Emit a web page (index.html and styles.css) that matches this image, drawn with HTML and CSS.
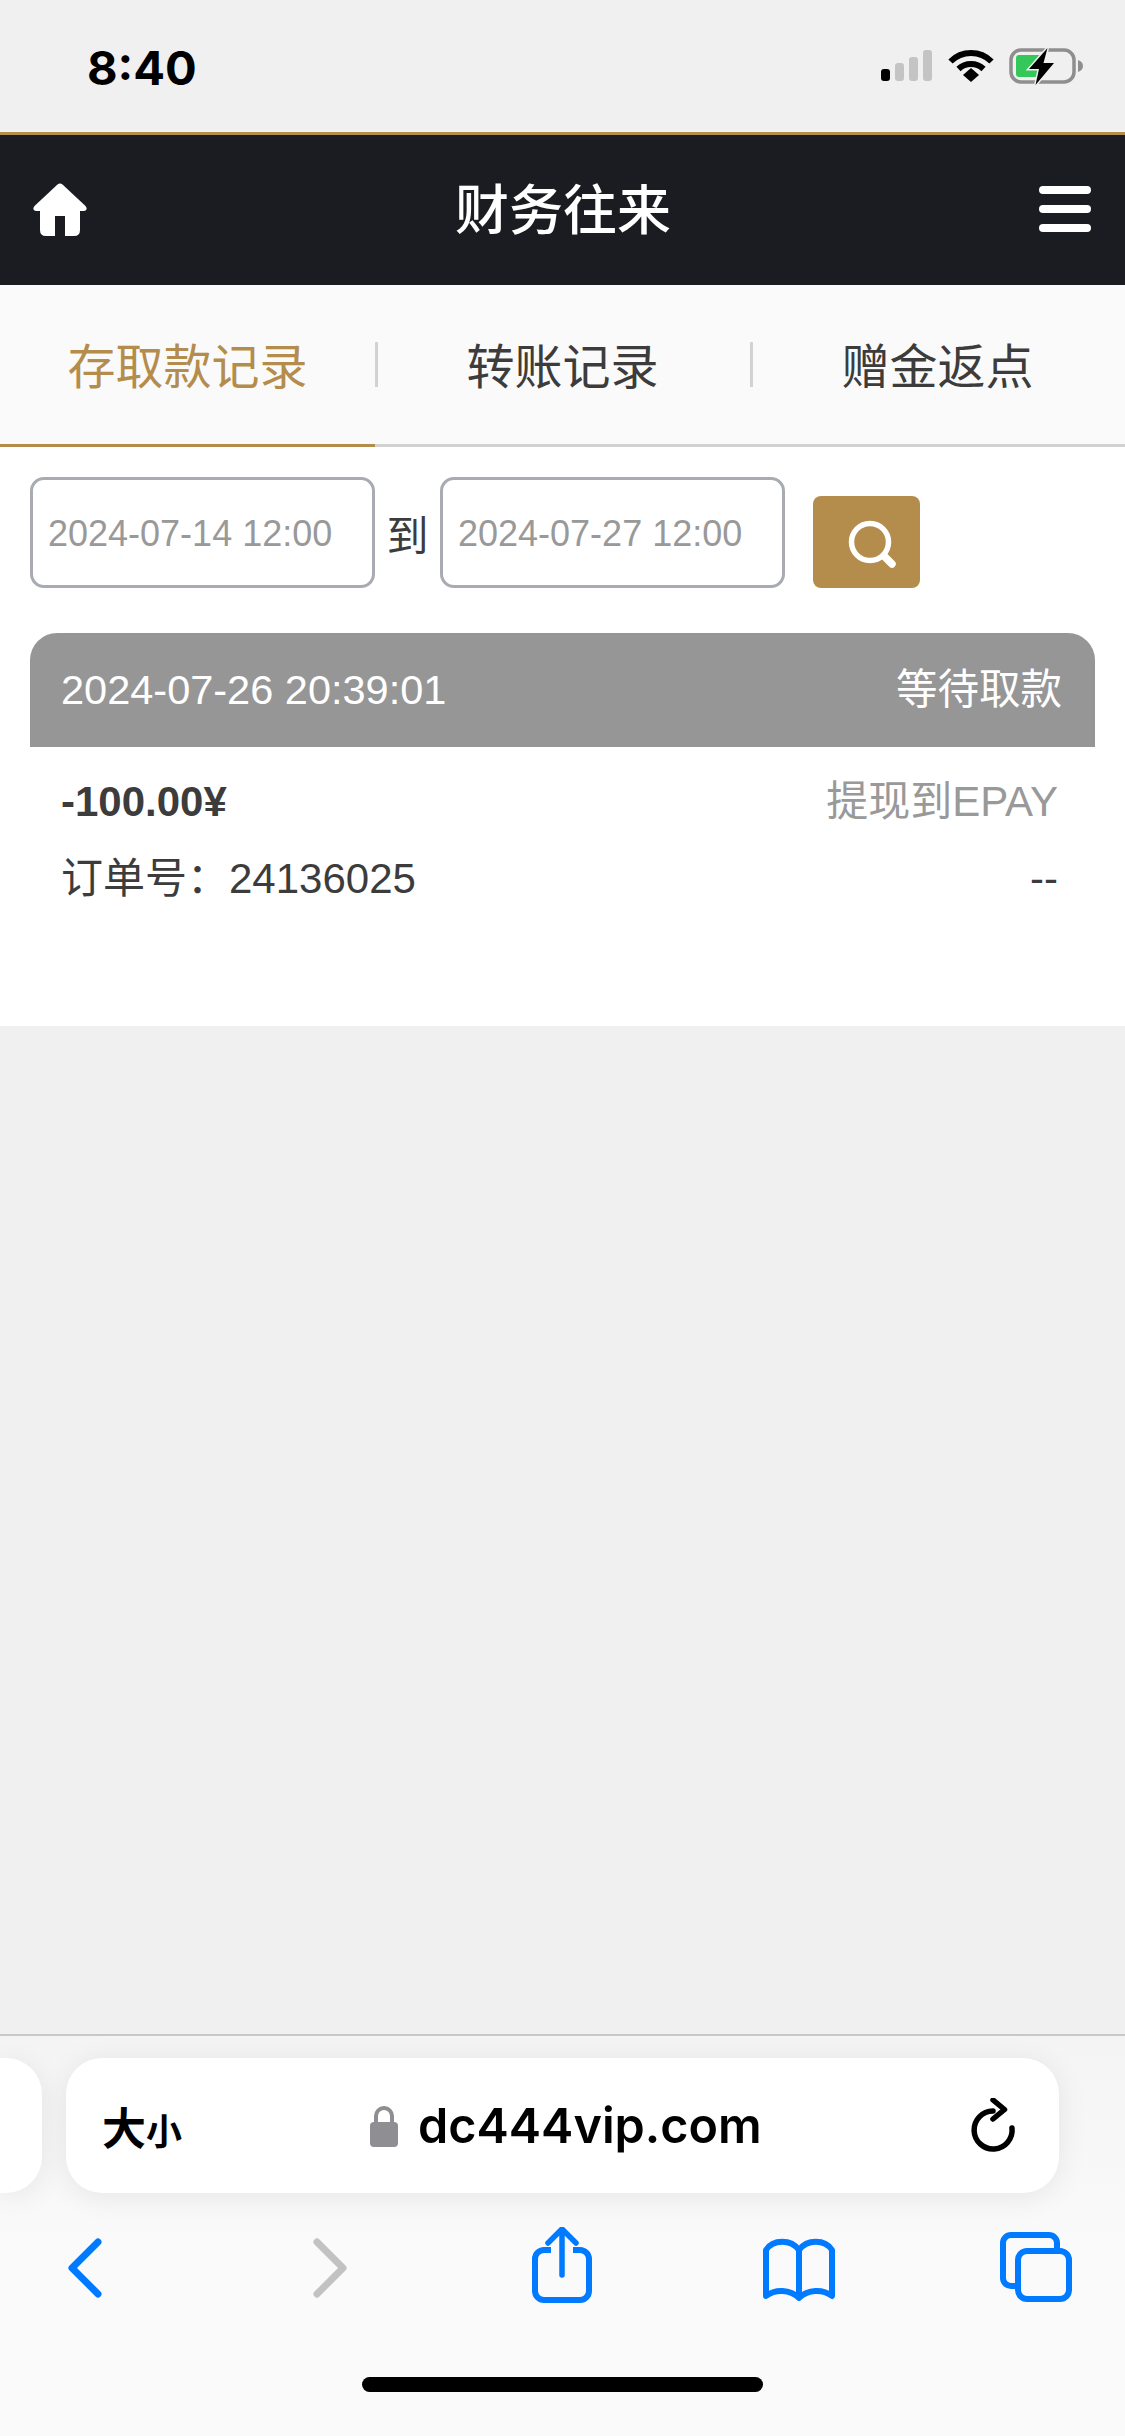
FILE: index.html
```html
<!DOCTYPE html>
<html lang="zh-CN">
<head>
    <meta charset="UTF-8">
    <meta name="viewport" content="width=device-width, initial-scale=1.0">
    <title>财务往来</title>
    <link rel="stylesheet" href="styles.css">
</head>
<body>
    <!-- Status bar -->
    <div class="status-bar">
        <span class="status-time">8:40</span>
        <div class="status-icons">
            <svg width="52" height="34" viewBox="0 0 52 34">
                <rect x="0" y="20" width="9" height="12" rx="3" fill="#000"/>
                <rect x="14" y="14" width="9" height="18" rx="3" fill="#c4c4c4"/>
                <rect x="28" y="8" width="9" height="24" rx="3" fill="#c4c4c4"/>
                <rect x="42" y="1" width="9" height="31" rx="3" fill="#c4c4c4"/>
            </svg>
            <svg width="46" height="34" viewBox="0 0 46 34">
                <path d="M2.5 12.5a29 29 0 0 1 41 0" fill="none" stroke="#000" stroke-width="6"/>
                <path d="M10.5 20a18 18 0 0 1 25 0" fill="none" stroke="#000" stroke-width="6"/>
                <path d="M15 26l8-7 8 7-8 7z" fill="#000"/>
            </svg>
            <svg width="74" height="38" viewBox="0 0 74 38">
                <rect x="2" y="3" width="63" height="32" rx="10" fill="none" stroke="#8e8e8e" stroke-width="3.5"/>
                <path d="M10 8h21v22H10a3 3 0 0 1-3-3V11a3 3 0 0 1 3-3z" fill="#34c759"/>
                <path d="M38.5 1L20 22h10L26.5 38 45 16H34.5z" fill="#000" stroke="#f0f0f0" stroke-width="3" paint-order="stroke"/>
                <path d="M69 13c3 1 5 3 5 6s-2 5-5 6z" fill="#8e8e8e"/>
            </svg>
        </div>
    </div>

    <!-- Top navigation -->
    <header class="top-nav">
        <svg class="nav-home" width="54" height="54" viewBox="0 0 54 54">
            <path d="M24.5 1.5Q27-.5 29.5 1.5L52.5 23Q55.5 27 51 28H47V47Q47 53 41 53H32V33H22V53H13Q7 53 7 47V28H3Q-1.5 27 1.5 23Z" fill="#fff"/>
        </svg>
        <h1 class="nav-title">财务往来</h1>
        <div class="nav-menu"><span></span><span></span><span></span></div>
    </header>

    <!-- Record type tabs -->
    <nav class="tabs">
        <a class="tab tab-active">存取款记录</a>
        <a class="tab">转账记录</a>
        <a class="tab">赠金返点</a>
    </nav>

    <main class="content">
        <div class="search-row">
            <div class="date-input">2024-07-14 12:00</div>
            <span class="date-sep">到</span>
            <div class="date-input">2024-07-27 12:00</div>
            <button class="btn-search">
                <svg width="60" height="60" viewBox="0 0 60 60">
                    <circle cx="33" cy="30" r="18.5" fill="none" stroke="#fff" stroke-width="5.5"/>
                    <path d="M47 44l8 8" fill="none" stroke="#fff" stroke-width="7.5" stroke-linecap="round"/>
                </svg>
            </button>
        </div>

        <div class="record-card">
            <div class="record-head">
                <span>2024-07-26 20:39:01</span>
                <span>等待取款</span>
            </div>
            <div class="record-body">
                <div class="record-row">
                    <span class="record-amount">-100.00¥</span>
                    <span class="record-method">提现到EPAY</span>
                </div>
                <div class="record-row">
                    <span>订单号：24136025</span>
                    <span>--</span>
                </div>
            </div>
        </div>
    </main>

    <!-- Browser toolbar -->
    <footer class="browser-bar">
        <div class="address-row">
            <div class="address-prev"></div>
            <div class="address-pill">
                <span class="address-size">大<small>小</small></span>
                <span class="address-url">
                    <svg width="30" height="42" viewBox="0 0 30 42">
                        <path d="M7 19v-8a8 8 0 0 1 16 0v8" fill="none" stroke="#8e8e93" stroke-width="4"/>
                        <rect x="1" y="17" width="28" height="25" rx="4" fill="#8e8e93"/>
                    </svg>
                    dc444vip.com
                </span>
                <svg class="address-reload" width="48" height="56" viewBox="0 0 48 56">
                    <path d="M22 13A19 19 0 1 0 41 30" fill="none" stroke="#000" stroke-width="5.5" stroke-linecap="round"/>
                    <path d="M22 2l11.5 9.5L22 21" fill="none" stroke="#000" stroke-width="5.5" stroke-linecap="round" stroke-linejoin="round"/>
                </svg>
            </div>
        </div>
        <div class="toolbar">
            <svg class="tool-back" width="36" height="60" viewBox="0 0 36 60">
                <path d="M30 4L4 30l26 26" fill="none" stroke="#007aff" stroke-width="7" stroke-linecap="round" stroke-linejoin="round"/>
            </svg>
            <svg class="tool-forward" width="36" height="60" viewBox="0 0 36 60">
                <path d="M5 4l26 26L5 56" fill="none" stroke="#c2c2c2" stroke-width="7" stroke-linecap="round" stroke-linejoin="round"/>
            </svg>
            <svg class="tool-share" width="60" height="76" viewBox="0 0 60 76">
                <path d="M19 23h-7a9 9 0 0 0-9 9v32a9 9 0 0 0 9 9h36a9 9 0 0 0 9-9V32a9 9 0 0 0-9-9h-7" fill="none" stroke="#007aff" stroke-width="6"/>
                <path d="M30 48V3M16 16L30 2l14 14" fill="none" stroke="#007aff" stroke-width="5.5" stroke-linecap="round" stroke-linejoin="round"/>
            </svg>
            <svg class="tool-book" width="74" height="64" viewBox="0 0 74 64">
                <path d="M37 13c-8-11-26-11-33 0v46c9-7 24-7 33 2 9-9 24-9 33-2V13C63 2 45 2 37 13zV61" fill="none" stroke="#007aff" stroke-width="6" stroke-linejoin="round"/>
            </svg>
            <svg class="tool-tabs" width="72" height="70" viewBox="0 0 72 70">
                <path d="M18 54h-7a8 8 0 0 1-8-8V11a8 8 0 0 1 8-8h38a8 8 0 0 1 8 8v7" fill="none" stroke="#007aff" stroke-width="6"/>
                <rect x="18" y="19" width="51" height="48" rx="9" fill="none" stroke="#007aff" stroke-width="6"/>
            </svg>
        </div>
        <div class="home-indicator"></div>
    </footer>
</body>
</html>
```

FILE: styles.css
```css
* {
    box-sizing: border-box;
    margin: 0;
    padding: 0;
}

body {
    font-family: "Liberation Sans", "Noto Sans CJK SC", sans-serif;
    width: 1125px;
    height: 2436px;
    display: flex;
    flex-direction: column;
    background-color: #f0f0f0;
    color: #3c3c3c;
    overflow: hidden;
}

.status-bar {
    height: 132px;
    padding: 0 42px 0 87px;
    display: flex;
    justify-content: space-between;
    align-items: center;
    flex-shrink: 0;
}

.status-time {
    font-family: Inter, "Liberation Sans", sans-serif;
    font-size: 47px;
    font-weight: 700;
    color: #000;
    padding-top: 3px;
}

.status-icons {
    display: flex;
    align-items: center;
    gap: 15px;
}

.top-nav {
    height: 153px;
    border-top: 3px solid #b48c4b;
    background-color: #1a1c22;
    padding: 0 34px 0 33px;
    display: flex;
    justify-content: space-between;
    align-items: center;
    flex-shrink: 0;
}

.nav-title {
    font-size: 54px;
    font-weight: 500;
    color: #fff;
    padding-bottom: 8px;
}

.nav-menu {
    width: 52px;
    display: flex;
    flex-direction: column;
    gap: 11px;
    padding-bottom: 2px;
}

.nav-menu span {
    height: 8px;
    border-radius: 4px;
    background-color: #fff;
}

.tabs {
    height: 162px;
    background-color: #fafafa;
    border-bottom: 3px solid #d2d2d2;
    display: flex;
    flex-shrink: 0;
}

.tab {
    position: relative;
    flex: 1;
    display: flex;
    justify-content: center;
    align-items: center;
    padding-bottom: 3px;
    margin-bottom: -3px;
    border-bottom: 3px solid transparent;
    font-size: 48px;
    color: #3c3c3c;
}

/* short divider between tabs */
.tab + .tab::before {
    content: "";
    position: absolute;
    left: 0;
    top: 57px;
    height: 45px;
    width: 3px;
    background-color: #d2d2d2;
}

.tab-active {
    color: #b48c4b;
    border-bottom-color: #b48c4b;
}

.content {
    flex: 1;
    display: flex;
    flex-direction: column;
}

.search-row {
    background-color: #fff;
    padding: 30px 30px 0;
    display: flex;
    align-items: flex-end;
}

.date-input {
    width: 345px;
    height: 111px;
    border: 3px solid #a9abb2;
    border-radius: 14px;
    padding: 2px 0 0 15px;
    background-color: #fff;
    display: flex;
    align-items: center;
    font-size: 36px;
    color: #999;
}

.date-sep {
    width: 65px;
    align-self: center;
    text-align: center;
    font-size: 42px;
}

.btn-search {
    width: 107px;
    height: 92px;
    margin-left: 28px;
    border: none;
    border-radius: 8px;
    background-color: #b48c4b;
    display: flex;
    justify-content: center;
    align-items: center;
}

.record-card {
    background-color: #fff;
    height: 438px;
    padding: 45px 30px 0;
}

.record-head {
    height: 114px;
    padding: 34px 33px 0 31px;
    border-radius: 27px 27px 0 0;
    background-color: #969696;
    display: flex;
    justify-content: space-between;
    align-items: baseline;
    font-size: 41.5px;
    line-height: 46px;
    color: #fff;
}

.record-body {
    padding: 32px 37px 0 31px;
    display: flex;
    flex-direction: column;
    gap: 31px;
}

.record-row {
    height: 46px;
    display: flex;
    justify-content: space-between;
    align-items: baseline;
    font-size: 42px;
    line-height: 46px;
}

.record-amount {
    font-weight: 700;
}

.record-method {
    color: #999;
}

.browser-bar {
    height: 402px;
    border-top: 2px solid #c8c8c8;
    background: linear-gradient(#f4f4f4, #fafafa 210px);
    display: flex;
    flex-direction: column;
    flex-shrink: 0;
}

.address-row {
    padding-top: 22px;
    display: flex;
    gap: 24px;
}

.address-prev {
    width: 42px;
    height: 135px;
    border-radius: 0 36px 36px 0;
    background-color: #fff;
    box-shadow: 0 4px 30px rgba(0, 0, 0, 0.08);
}

.address-pill {
    position: relative;
    width: 993px;
    height: 135px;
    border-radius: 36px;
    background-color: #fff;
    box-shadow: 0 4px 30px rgba(0, 0, 0, 0.08);
    display: flex;
    justify-content: space-between;
    align-items: center;
    padding: 0 40px 0 36px;
}

.address-size {
    font-size: 44px;
    font-weight: 700;
    color: #000;
}

.address-size small {
    font-size: 36px;
}

.address-url {
    position: absolute;
    left: 303px;
    display: flex;
    align-items: center;
    gap: 19px;
    font-family: Inter, "Liberation Sans", sans-serif;
    font-size: 48.5px;
    font-weight: 600;
    color: #000;
}

.toolbar {
    position: relative;
    height: 110px;
    margin-top: 34px;
}

/* toolbar buttons keep their own spots along the bar */
.toolbar svg {
    position: absolute;
}

.tool-back { left: 68px; top: 11px; }
.tool-forward { left: 312px; top: 11px; }
.tool-share { left: 532px; top: 0; }
.tool-book { left: 762px; top: 10px; }
.tool-tabs { left: 1000px; top: 5px; }

.home-indicator {
    width: 401px;
    height: 15px;
    margin: 40px auto 0;
    border-radius: 8px;
    background-color: #000;
}
```
